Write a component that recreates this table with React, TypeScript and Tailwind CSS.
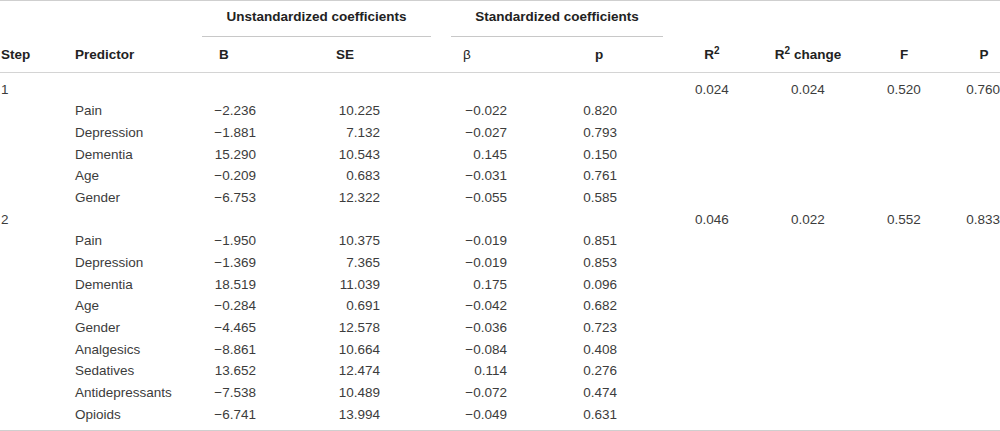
import React from "react";

type Row = {
  step?: string;
  pred?: string;
  b?: string;
  se?: string;
  beta?: string;
  p?: string;
  r2?: string;
  r2c?: string;
  f?: string;
  P?: string;
};

const rows: Row[] = [
  { step: "1", r2: "0.024", r2c: "0.024", f: "0.520", P: "0.760" },
  { pred: "Pain", b: "−2.236", se: "10.225", beta: "−0.022", p: "0.820" },
  { pred: "Depression", b: "−1.881", se: "7.132", beta: "−0.027", p: "0.793" },
  { pred: "Dementia", b: "15.290", se: "10.543", beta: "0.145", p: "0.150" },
  { pred: "Age", b: "−0.209", se: "0.683", beta: "−0.031", p: "0.761" },
  { pred: "Gender", b: "−6.753", se: "12.322", beta: "−0.055", p: "0.585" },
  { step: "2", r2: "0.046", r2c: "0.022", f: "0.552", P: "0.833" },
  { pred: "Pain", b: "−1.950", se: "10.375", beta: "−0.019", p: "0.851" },
  { pred: "Depression", b: "−1.369", se: "7.365", beta: "−0.019", p: "0.853" },
  { pred: "Dementia", b: "18.519", se: "11.039", beta: "0.175", p: "0.096" },
  { pred: "Age", b: "−0.284", se: "0.691", beta: "−0.042", p: "0.682" },
  { pred: "Gender", b: "−4.465", se: "12.578", beta: "−0.036", p: "0.723" },
  { pred: "Analgesics", b: "−8.861", se: "10.664", beta: "−0.084", p: "0.408" },
  { pred: "Sedatives", b: "13.652", se: "12.474", beta: "0.114", p: "0.276" },
  { pred: "Antidepressants", b: "−7.538", se: "10.489", beta: "−0.072", p: "0.474" },
  { pred: "Opioids", b: "−6.741", se: "13.994", beta: "−0.049", p: "0.631" },
];

export default function App() {
  return (
    <div
      className="w-[1000px] h-[431px] bg-white text-[13.5px] text-[#3c3c3c] overflow-hidden"
      style={{ fontFamily: '"Liberation Sans", Arial, Helvetica, sans-serif' }}
    >
      <div className="border-t border-[#cfcfcf]" />
      {/* header row 1 */}
      <div className="flex h-[36px] items-stretch font-bold text-[#222]">
        <div className="w-[202px]" />
        <div className="w-[229px] flex items-center justify-center pb-[2px] border-b border-[#c8c8c8]">
          Unstandardized coefficients
        </div>
        <div className="w-[20px]" />
        <div className="w-[212px] flex items-center justify-center pb-[2px] border-b border-[#c8c8c8]">
          Standardized coefficients
        </div>
        <div className="flex-1" />
      </div>
      {/* header row 2 */}
      <div className="flex h-[36px] pt-[2px] items-center font-bold text-[#222] border-b border-[#d4d4d4]">
        <div className="w-[75px] pl-[1px]">Step</div>
        <div className="w-[127px]">Predictor</div>
        <div className="w-[116px] pl-[17px]">B</div>
        <div className="w-[133px] pl-[18px]">SE</div>
        <div className="w-[106px] pl-[12px] font-normal">β</div>
        <div className="w-[106px] pl-[38px]">p</div>
        <div className="w-[98px] text-center">
          R<sup className="text-[10px] relative top-[-5px]">2</sup>
        </div>
        <div className="w-[94px] text-center">
          R<sup className="text-[10px] relative top-[-5px]">2</sup> change
        </div>
        <div className="w-[98px] text-center">F</div>
        <div className="w-[47px] pl-[15px] text-center">P</div>
      </div>
      {/* body */}
      <div className="pt-[6px] pb-[4px] border-b border-[#cfcfcf]">
        {rows.map((r, i) => (
          <div key={i} className="flex h-[21.67px] items-center">
            <div className="w-[75px] pl-[1px]">{r.step ?? ""}</div>
            <div className="w-[127px]">{r.pred ?? ""}</div>
            <div className="w-[116px]">
              <div className="w-[54px] text-right">{r.b ?? ""}</div>
            </div>
            <div className="w-[133px]">
              <div className="w-[62px] text-right">{r.se ?? ""}</div>
            </div>
            <div className="w-[106px]">
              <div className="w-[56px] text-right">{r.beta ?? ""}</div>
            </div>
            <div className="w-[106px]">
              <div className="w-[60px] text-right">{r.p ?? ""}</div>
            </div>
            <div className="w-[98px] text-center">{r.r2 ?? ""}</div>
            <div className="w-[94px] text-center">{r.r2c ?? ""}</div>
            <div className="w-[98px] text-center">{r.f ?? ""}</div>
            <div className="w-[47px] text-right">{r.P ?? ""}</div>
          </div>
        ))}
      </div>
    </div>
  );
}
